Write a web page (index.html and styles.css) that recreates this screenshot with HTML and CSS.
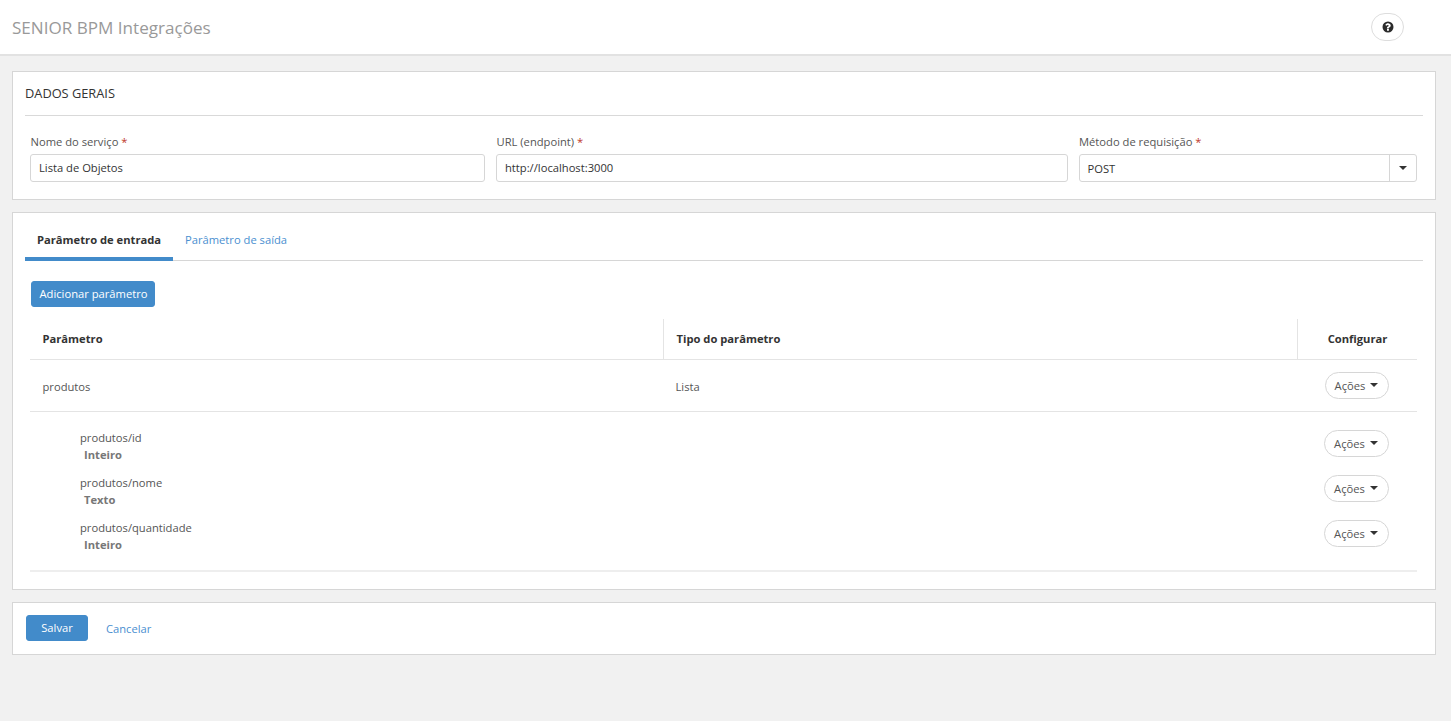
FILE: index.html
```html
<!DOCTYPE html>
<html lang="pt">
<head>
<meta charset="utf-8">
<title>SENIOR BPM Integrações</title>
<link rel="stylesheet" href="styles.css">
</head>
<body>
<header class="topbar">
  <h1 class="brand">SENIOR BPM Integrações</h1>
  <button class="help" type="button" aria-label="Ajuda">
    <svg viewBox="0 0 12 12" width="12" height="12"><path fill-rule="evenodd" fill="#2b2b2b" d="M6 .5a5.5 5.5 0 1 1 0 11 5.5 5.5 0 0 1 0-11zM5 8v1.7h1.9V8zM6.1 2.3c-1.3 0-2.2.6-2.8 1.6l1.2.9c.4-.5.7-.8 1.3-.8.5 0 .9.3.9.7 0 .4-.3.6-.8.9-.6.3-1 .7-1 1.5v.3h1.9v-.2c0-.3.2-.4.6-.7.7-.4 1.3-.9 1.3-1.9 0-1.4-1.3-2.3-2.6-2.3z"/></svg>
  </button>
</header>
<main class="page">
  <section class="panel general">
    <h2 class="panel-title">DADOS GERAIS</h2>
    <div class="form-row">
      <div class="field">
        <label class="label">Nome do serviço <span class="req">*</span></label>
        <div class="input">Lista de Objetos</div>
      </div>
      <div class="field">
        <label class="label">URL (endpoint) <span class="req">*</span></label>
        <div class="input">http://localhost:3000</div>
      </div>
      <div class="field">
        <label class="label">Método de requisição <span class="req">*</span></label>
        <div class="input select"><span class="select-value">POST</span><span class="select-btn"><i class="caret"></i></span></div>
      </div>
    </div>
  </section>

  <section class="panel params">
    <nav class="tabs">
      <a class="tab active">Parâmetro de entrada</a>
      <a class="tab">Parâmetro de saída</a>
    </nav>
    <div class="tab-body">
      <button class="btn primary add" type="button">Adicionar parâmetro</button>
      <div class="table">
        <div class="row head">
          <div class="cell c1">Parâmetro</div>
          <div class="cell c2">Tipo do parâmetro</div>
          <div class="cell c3">Configurar</div>
        </div>
        <div class="row item">
          <div class="cell c1">produtos</div>
          <div class="cell c2">Lista</div>
          <div class="cell c3"><button class="actions" type="button">Ações <i class="caret"></i></button></div>
        </div>
        <div class="children">
          <div class="child">
            <div class="child-text"><div>produtos/id</div><strong class="type">Inteiro</strong></div>
            <button class="actions wide" type="button">Ações <i class="caret"></i></button>
          </div>
          <div class="child">
            <div class="child-text"><div>produtos/nome</div><strong class="type">Texto</strong></div>
            <button class="actions wide" type="button">Ações <i class="caret"></i></button>
          </div>
          <div class="child">
            <div class="child-text"><div>produtos/quantidade</div><strong class="type">Inteiro</strong></div>
            <button class="actions wide" type="button">Ações <i class="caret"></i></button>
          </div>
        </div>
      </div>
    </div>
  </section>

  <section class="panel footer">
    <button class="btn primary save" type="button">Salvar</button>
    <a class="cancel">Cancelar</a>
  </section>
</main>
</body>
</html>
```
FILE: styles.css
```css
* { box-sizing: border-box; }
html, body { height: 100%; }
body {
  margin: 0;
  background: #f1f1f1;
  color: #333;
  font-family: "Open Sans", sans-serif;
  font-size: 11.2px;
  line-height: 17px;
  overflow: hidden;
}
button { font-family: inherit; }

.topbar {
  height: 56px;
  background: #fff;
  border-bottom: 2px solid #e2e2e2;
  display: flex;
  align-items: center;
  justify-content: space-between;
  padding: 0 47px 0 12px;
}
.brand { margin: 1px 0 0; font-size: 17.08px; font-weight: 400; color: #999; line-height: 24px; }
.help {
  width: 33px; height: 28px;
  border: 1px solid #ddd; border-radius: 14px;
  background: #fff; padding: 0;
  display: flex; align-items: center; justify-content: center;
}

.page { padding: 15px 15px 0 12px; display: flex; flex-direction: column; gap: 12px; }
.panel { background: #fff; border: 1px solid #d6d6d6; padding: 0 12px; }

.general { height: 129px; }
.panel-title {
  margin: 0; height: 44px;
  font-size: 12.8px; font-weight: 400; color: #333; line-height: 43px;
  border-bottom: 1px solid #d9d9d9;
}
.form-row { display: grid; grid-template-columns: 4fr 5fr 3fr; margin-top: 17px; }
.field { padding: 0 6px 0 5px; }
.label { display: block; color: #555; line-height: 17px; margin-bottom: 4px; padding-left: .5px; }
.req { color: #c0392b; }
.input {
  height: 28px; border: 1px solid #d6d6d6; border-radius: 3px;
  padding: 0 8px; line-height: 26px; color: #333; background: #fff;
}
.select { display: flex; padding: 0 0 0 8px; line-height: 27px; }
.select-value { flex: 1; }
.select-btn {
  width: 27px; border-left: 1px solid #d6d6d6;
  display: flex; align-items: center; justify-content: center;
}
.caret {
  display: inline-block; width: 0; height: 0;
  border-left: 4px solid transparent; border-right: 4px solid transparent;
  border-top: 4px solid #333;
}

.params { height: 378px; padding-top: 11px; }
.tabs { display: flex; height: 37px; border-bottom: 1px solid #d6d6d6; }
.tab { padding: 0 12px; line-height: 32px; color: #4a8fd0; height: 37px; white-space: nowrap; }
.tab.active { color: #333; font-weight: 700; border-bottom: 4px solid #428bca; width: 148px; }
.tab-body { padding: 20px 6px 0 5px; }

.btn { border: 1px solid #428bca; border-radius: 3px; background: #428bca; color: #fff; font-size: 11.2px; }
.add { display: block; width: 124px; height: 26px; padding: 0 0 2px 1px; margin-left: 1px; }

.table { margin-top: 12px; }
.row { display: flex; border-bottom: 1px solid #e4e4e4; }
.head { height: 41px; font-weight: 700; color: #333; }
.head .cell { padding-bottom: 2px; }
.item { height: 52px; color: #555; }
.cell { padding: 0 12px 0 12.5px; display: flex; align-items: center; }
.c1 { width: 633px; }
.c2 { flex: 1; }
.c3 { width: 120px; justify-content: center; padding: 0; }
.head .c2, .head .c3 { border-left: 1px solid #e4e4e4; }
.item .c3 { padding-left: 0; justify-content: flex-end; padding-right: 28px; }
.item .c1, .item .c2 { padding-top: 1px; }

.actions {
  display: inline-flex; align-items: center; justify-content: center; gap: 5px;
  width: 64px; height: 27px; padding: 0 1px 1px 0;
  border: 1px solid #d6d6d6; border-radius: 14px;
  background: #fff; color: #555; font-size: 11.2px;
}
.actions.wide { width: 65px; }

.children { padding: 18px 0 5px 50px; border-bottom: 2px solid #eee; }
.child { display: flex; align-items: flex-start; justify-content: space-between; height: 45px; padding-right: 28px; color: #555; }
.type { display: block; padding-left: 4px; color: #777; font-weight: 700; }
.child-text { line-height: 17px; margin-top: -1px; }

.footer { height: 53px; display: flex; align-items: flex-start; padding-top: 12px; }
.save { width: 62px; height: 26px; padding: 0 0 2px; margin-left: 1px; }
.cancel { margin-left: 18px; margin-top: 5px; color: #4a8fd0; }
```
